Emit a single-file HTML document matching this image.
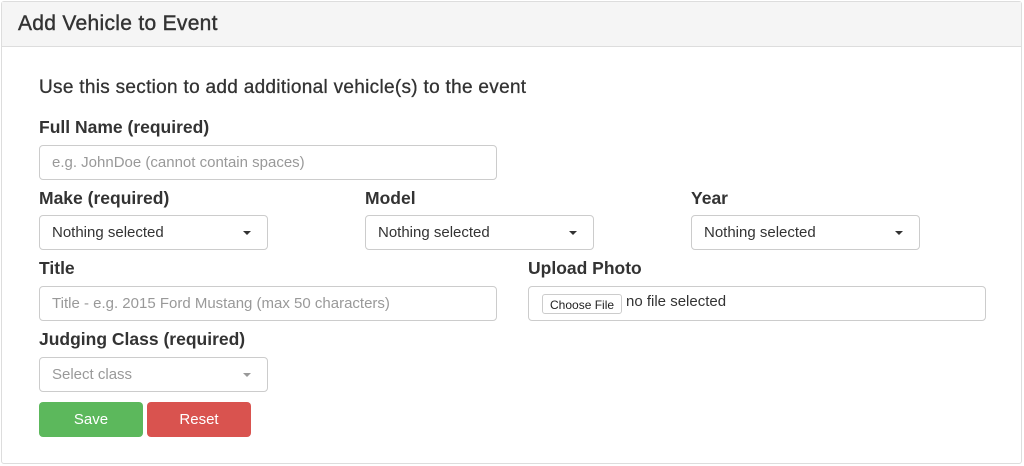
<!DOCTYPE html>
<html><head><meta charset="utf-8"><style>
*{box-sizing:border-box;margin:0;padding:0}
body{width:1024px;height:466px;background:#fff;font-family:"Liberation Sans",Arial,sans-serif;color:#333;position:relative;overflow:hidden}
.panel{position:absolute;left:1px;top:1px;width:1021px;height:463px;border:1px solid #ddd;border-radius:3px}
.hd{position:absolute;left:0;top:0;right:0;height:45px;background:#f5f5f5;border-bottom:1px solid #ddd}
.hd span{position:absolute;left:16px;top:10px;font-size:21px;letter-spacing:0.3px;color:#333;-webkit-text-stroke:0.4px #333}
.a{position:absolute;white-space:nowrap}
.intro{left:39px;top:77px;font-size:19px;letter-spacing:0.3px;color:#333;-webkit-text-stroke:0.3px #333}
.lbl{font-size:17.5px;font-weight:bold;color:#333}
.in{border:1px solid #ccc;border-radius:4px;height:35px;font-size:15px;color:#999;padding:8px 12px 0;background:#fff}
.sel{color:#333}
.sel::after{content:"";position:absolute;right:16px;top:15px;border-left:4px solid transparent;border-right:4px solid transparent;border-top:4px solid #333}
.ph::after{border-top-color:#999}
.btn{height:35px;border-radius:4px;color:#fff;font-size:15px;text-align:center;line-height:36px}
.cf{position:absolute;left:13px;top:7px;height:20px;border:1px solid #ccc;border-radius:3px;font-size:12px;color:#222;padding:3px 7px 0;background:#fff}
</style></head><body>
<div class="panel"><div class="hd"><span>Add Vehicle to Event</span></div></div>
<div class="a intro">Use this section to add additional vehicle(s) to the event</div>
<div class="a lbl" style="left:39px;top:117px">Full Name (required)</div>
<div class="a in" style="left:39px;top:145px;width:458px">e.g. JohnDoe (cannot contain spaces)</div>
<div class="a lbl" style="left:39px;top:188px">Make (required)</div>
<div class="a lbl" style="left:365px;top:188px">Model</div>
<div class="a lbl" style="left:691px;top:188px">Year</div>
<div class="a in sel" style="left:39px;top:215px;width:229px">Nothing selected</div>
<div class="a in sel" style="left:365px;top:215px;width:229px">Nothing selected</div>
<div class="a in sel" style="left:691px;top:215px;width:229px">Nothing selected</div>
<div class="a lbl" style="left:39px;top:258px">Title</div>
<div class="a lbl" style="left:528px;top:258px">Upload Photo</div>
<div class="a in" style="left:39px;top:286px;width:458px">Title - e.g. 2015 Ford Mustang (max 50 characters)</div>
<div class="a in" style="left:528px;top:286px;width:458px;color:#333;padding-left:97px;padding-top:6px">no file selected<div class="cf">Choose File</div></div>
<div class="a lbl" style="left:39px;top:329px">Judging Class (required)</div>
<div class="a in sel ph" style="left:39px;top:357px;width:229px;color:#999">Select class</div>
<div class="a btn" style="left:39px;top:402px;width:104px;background:#5cb85c">Save</div>
<div class="a btn" style="left:147px;top:402px;width:104px;background:#d9534f">Reset</div>
</body></html>
